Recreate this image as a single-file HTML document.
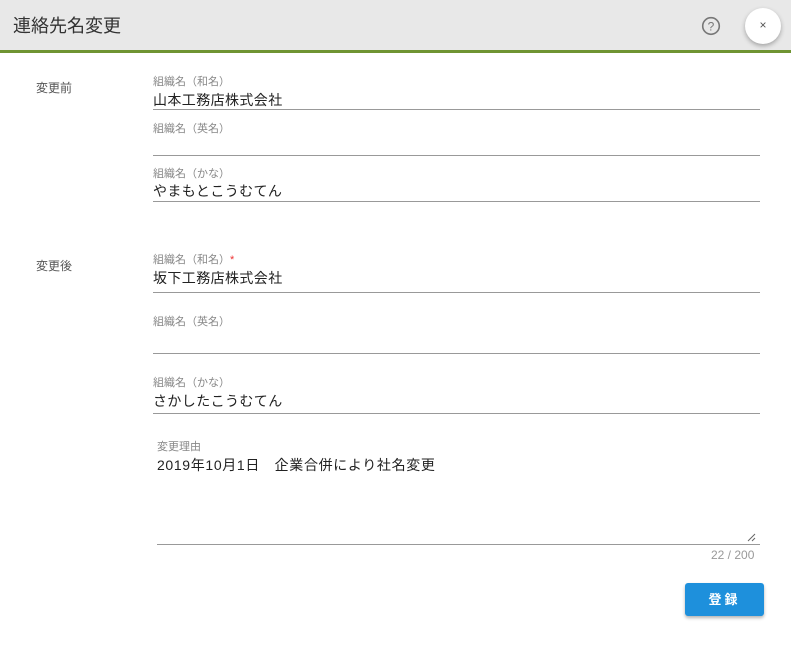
<!DOCTYPE html>
<html><head><meta charset="utf-8"><style>
*{margin:0;padding:0;box-sizing:border-box}
body{width:791px;height:655px;background:#fff;font-family:"Liberation Sans","Noto Sans CJK JP",sans-serif;position:relative;overflow:hidden;color:#222}
.hdr{position:absolute;left:0;top:0;width:791px;height:53px;background:#e8e8e8;border-bottom:3px solid #6f9432}
.ttl{position:absolute;left:13px;top:12px;font-size:18px;color:#333}
.a{position:absolute;white-space:nowrap}
.lab{font-size:11px;color:#888}
.val{font-size:14px;color:#222;letter-spacing:.4px}
.ln{position:absolute;left:153px;width:607px;height:1px;background:#999}
.sec{font-size:12px;color:#555}
</style></head><body>
<div class="hdr"><div class="ttl">連絡先名変更</div>
<svg style="position:absolute;left:701px;top:16px" width="20" height="20" viewBox="0 0 20 20"><circle cx="10" cy="10" r="8.3" fill="none" stroke="#777" stroke-width="1.6"/><text x="10" y="14.5" text-anchor="middle" font-size="12" font-family="Liberation Sans" fill="#777">?</text></svg>
<div style="position:absolute;left:745px;top:8px;width:36px;height:36px;border-radius:50%;background:#fff;box-shadow:0 2px 5px rgba(0,0,0,.3);text-align:center;line-height:35px;font-size:12px;color:#555">×</div>
</div>
<div class="a sec" style="left:36px;top:79px">変更前</div>
<div class="a sec" style="left:36px;top:257px">変更後</div>

<div class="a lab" style="left:153px;top:73px">組織名（和名）</div>
<div class="a val" style="left:153px;top:90px">山本工務店株式会社</div>
<div class="ln" style="top:109px"></div>
<div class="a lab" style="left:153px;top:120px">組織名（英名）</div>
<div class="ln" style="top:155px"></div>
<div class="a lab" style="left:153px;top:165px">組織名（かな）</div>
<div class="a val" style="left:153px;top:181px">やまもとこうむてん</div>
<div class="ln" style="top:201px"></div>

<div class="a lab" style="left:153px;top:251px">組織名（和名）<span style="color:#e33">*</span></div>
<div class="a val" style="left:153px;top:268px">坂下工務店株式会社</div>
<div class="ln" style="top:292px"></div>
<div class="a lab" style="left:153px;top:313px">組織名（英名）</div>
<div class="ln" style="top:353px"></div>
<div class="a lab" style="left:153px;top:374px">組織名（かな）</div>
<div class="a val" style="left:153px;top:391px">さかしたこうむてん</div>
<div class="ln" style="top:413px"></div>

<div class="a lab" style="left:157px;top:438px">変更理由</div>
<div class="a val" style="left:157px;top:455px;letter-spacing:.65px">2019年10月1日　企業合併により社名変更</div>
<svg style="position:absolute;left:747px;top:533px" width="9" height="9"><path d="M1 8L8 1M5 8L8 5" stroke="#666" stroke-width="1"/></svg>
<div class="ln" style="top:544px;left:157px;width:603px"></div>
<div class="a" style="left:711px;top:548px;font-size:12px;color:#999">22 / 200</div>

<div style="position:absolute;left:685px;top:583px;width:79px;height:33px;background:#1e90dc;border-radius:3px;box-shadow:0 2px 3px rgba(0,0,0,.3);color:#fff;font-size:13px;font-weight:bold;text-align:center;line-height:33px;letter-spacing:3px">登録</div>
</body></html>
